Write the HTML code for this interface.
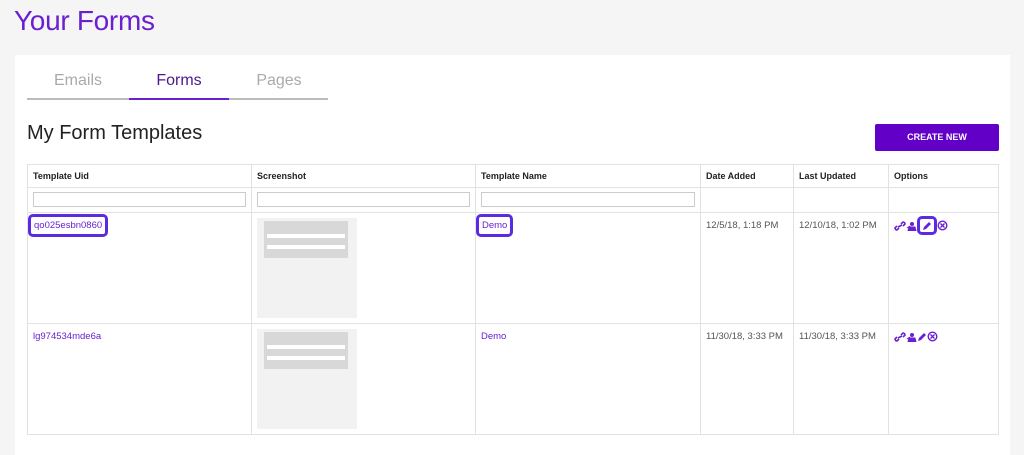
<!DOCTYPE html>
<html><head><style>
*{box-sizing:border-box;margin:0;padding:0}
body{width:1024px;height:433px;overflow:hidden;background:#f5f5f5;font-family:"Liberation Sans",sans-serif;position:relative}
.a{position:absolute}
h1{position:absolute;left:14px;top:5px;font-weight:normal;font-size:28px;color:#6a1fd0;letter-spacing:-0.3px}
.card{position:absolute;left:15px;top:55px;width:995px;height:400px;background:#fff}
.tab{position:absolute;top:72px;font-size:16px;color:#aaa;width:100px;text-align:center}
.tbl{position:absolute;left:27px;top:164px;width:972px;border-collapse:collapse;font-size:9.5px}
.tbl td{border:1px solid #e2e2e2;vertical-align:top;padding:7px 5px 0;color:#555}
.tbl th{border:1px solid #e2e2e2;text-align:left;padding:0 5px;height:23px;font-size:9px;color:#222}
.tbl input{width:100%;height:15px;border:1px solid #ccc;display:block}
a{color:#6a1fd0;text-decoration:none}
.hl{border:3px solid #5a2be0;border-radius:5px;padding:3px 3px;margin:-6px 0 0 -5px;display:inline-block}
.thumb{width:100px;height:100px;background:#f2f2f2;position:relative;margin-top:-2px}
.thumb .g{position:absolute;left:7px;top:3px;width:84px;height:37px;background:#d8d8d8}
.thumb .i{position:absolute;left:10px;background:#fff;height:4px;width:78px}
.ic svg{vertical-align:middle}
</style></head><body>
<h1>Your Forms</h1>
<div class="card"></div>
<div class="tab" style="left:28px">Emails</div>
<div class="tab" style="left:129px;color:#4a1a8c">Forms</div>
<div class="tab" style="left:229px">Pages</div>
<div class="a" style="left:27px;top:98px;width:301px;height:2px;background:#bbb"></div>
<div class="a" style="left:129px;top:98px;width:100px;height:2px;background:#6a1fd0"></div>
<div class="a" style="left:27px;top:122px;font-size:20px;color:#222">My Form Templates</div>
<div class="a" style="left:875px;top:124px;width:124px;height:27px;background:#6300c8;border-radius:2px;color:#fff;font-size:9px;font-weight:bold;text-align:center;line-height:27px">CREATE NEW</div>
<table class="tbl">
<tr><th style="width:224px">Template Uid</th><th style="width:224px">Screenshot</th><th style="width:225px">Template Name</th><th style="width:93px">Date Added</th><th style="width:95px">Last Updated</th><th>Options</th></tr>
<tr style="height:25px"><td style="padding:4px 5px"><input></td><td style="padding:4px 5px"><input></td><td style="padding:4px 5px"><input></td><td></td><td></td><td></td></tr>
<tr style="height:111px"><td><a class="hl">qo025esbn0860</a></td><td><div class="thumb"><div class="g"></div><div class="i" style="top:16px"></div><div class="i" style="top:27px"></div></div></td><td><a class="hl">Demo</a></td><td>12/5/18, 1:18 PM</td><td>12/10/18, 1:02 PM</td><td class="ic">
<svg width="12" height="10" viewBox="0 0 12 10"><path d="M5 7 L3 9 A2 2 0 0 1 1 7 L3 5 M7 3 L9 1 A2 2 0 0 1 11 3 L9 5 M4 6 L8 4" stroke="#6a1fd0" stroke-width="1.6" fill="none"/></svg><svg width="11" height="10" viewBox="0 0 11 10"><circle cx="6" cy="3" r="2" fill="#6a1fd0"/><path d="M2 10 L3 6 L9 6 L10 10Z M1 7 L4 5" fill="#6a1fd0" stroke="#6a1fd0"/></svg><span class="hl" style="margin:-5px 0 0 0;padding:1px 2px"><svg width="10" height="10" viewBox="0 0 10 10"><path d="M1 9 L2 6 L7 1 L9 3 L4 8Z" fill="#6a1fd0"/></svg></span><svg width="11" height="11" viewBox="0 0 11 11"><circle cx="5.5" cy="5.5" r="4.3" stroke="#6a1fd0" stroke-width="1.4" fill="none"/><path d="M3.5 3.5 L7.5 7.5 M7.5 3.5 L3.5 7.5" stroke="#6a1fd0" stroke-width="1.4"/></svg></td></tr>
<tr style="height:111px"><td><a>lg974534mde6a</a></td><td><div class="thumb"><div class="g"></div><div class="i" style="top:16px"></div><div class="i" style="top:27px"></div></div></td><td><a>Demo</a></td><td>11/30/18, 3:33 PM</td><td>11/30/18, 3:33 PM</td><td class="ic">
<svg width="12" height="10" viewBox="0 0 12 10"><path d="M5 7 L3 9 A2 2 0 0 1 1 7 L3 5 M7 3 L9 1 A2 2 0 0 1 11 3 L9 5 M4 6 L8 4" stroke="#6a1fd0" stroke-width="1.6" fill="none"/></svg><svg width="11" height="10" viewBox="0 0 11 10"><circle cx="6" cy="3" r="2" fill="#6a1fd0"/><path d="M2 10 L3 6 L9 6 L10 10Z M1 7 L4 5" fill="#6a1fd0" stroke="#6a1fd0"/></svg><svg width="10" height="10" viewBox="0 0 10 10"><path d="M1 9 L2 6 L7 1 L9 3 L4 8Z" fill="#6a1fd0"/></svg><svg width="11" height="11" viewBox="0 0 11 11"><circle cx="5.5" cy="5.5" r="4.3" stroke="#6a1fd0" stroke-width="1.4" fill="none"/><path d="M3.5 3.5 L7.5 7.5 M7.5 3.5 L3.5 7.5" stroke="#6a1fd0" stroke-width="1.4"/></svg></td></tr>
</table>
</body></html>
